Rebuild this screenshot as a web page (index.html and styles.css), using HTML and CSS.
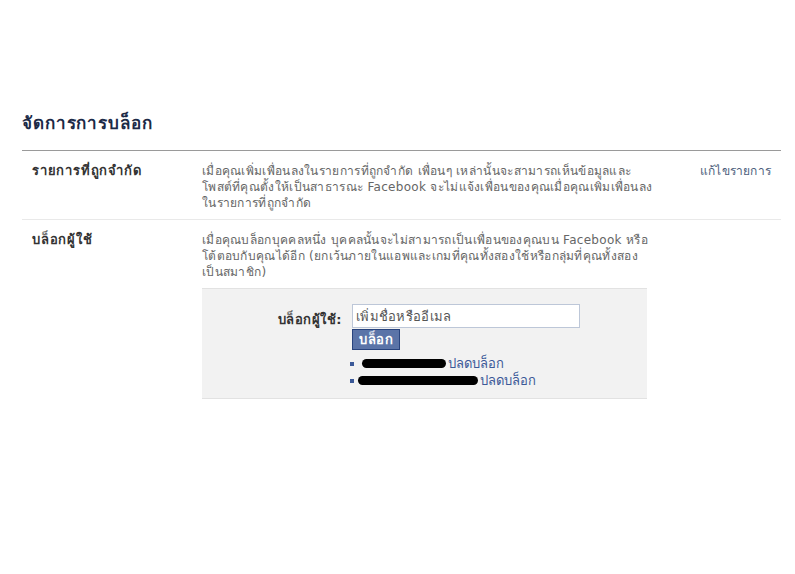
FILE: index.html
```html
<!DOCTYPE html>
<html lang="th">
<head>
    <meta charset="UTF-8">
    <title>จัดการการบล็อก</title>
    <link rel="stylesheet" href="styles.css">
</head>
<body>
    <div class="page">
        <h2 class="page-title">จัดการการบล็อก</h2>
        <div class="settings">
            <div class="row">
                <div class="row-label">รายการที่ถูกจำกัด</div>
                <div class="row-body">
                    <p class="row-desc">เมื่อคุณเพิ่มเพื่อนลงในรายการที่ถูกจำกัด เพื่อนๆ เหล่านั้นจะสามารถเห็นข้อมูลและ<br>โพสต์ที่คุณตั้งให้เป็นสาธารณะ Facebook จะไม่แจ้งเพื่อนของคุณเมื่อคุณเพิ่มเพื่อนลง<br>ในรายการที่ถูกจำกัด</p>
                </div>
                <div class="row-action"><a href="#">แก้ไขรายการ</a></div>
            </div>
            <div class="row">
                <div class="row-label">บล็อกผู้ใช้</div>
                <div class="row-body">
                    <p class="row-desc">เมื่อคุณบล็อกบุคคลหนึ่ง บุคคลนั้นจะไม่สามารถเป็นเพื่อนของคุณบน Facebook หรือ<br>โต้ตอบกับคุณได้อีก (ยกเว้นภายในแอพและเกมที่คุณทั้งสองใช้หรือกลุ่มที่คุณทั้งสอง<br>เป็นสมาชิก)</p>
                    <div class="block-box">
                        <div class="block-form">
                            <label class="block-label" for="block-user">บล็อกผู้ใช้:</label>
                            <div class="block-fields">
                                <input type="text" id="block-user" class="block-input" placeholder="เพิ่มชื่อหรืออีเมล">
                                <button class="block-button">บล็อก</button>
                                <ul class="blocked-list">
                                    <li><span class="redacted r1"></span><a href="#">ปลดบล็อก</a></li>
                                    <li><span class="redacted r2"></span><a href="#">ปลดบล็อก</a></li>
                                </ul>
                            </div>
                        </div>
                    </div>
                </div>
                <div class="row-action"></div>
            </div>
        </div>
    </div>
</body>
</html>
```

FILE: styles.css
```css
* {
    margin: 0;
    padding: 0;
    box-sizing: border-box;
}

body {
    background: #ffffff;
    font-family: Tahoma, "DejaVu Sans", "Noto Sans", sans-serif;
    font-size: 12px;
    color: #333333;
}

.page {
    padding: 111px 14px 0 22px;
}

.page-title {
    font-size: 17px;
    font-weight: bold;
    letter-spacing: 0.9px;
    color: #1c2a47;
    line-height: 24px;
    padding-bottom: 15px;
    border-bottom: 1px solid #9a9a9a;
}

.row {
    display: flex;
    padding: 12px 0 8px;
    border-bottom: 1px solid #e9e9e9;
}

.row:last-child {
    border-bottom: none;
}

.row-label {
    width: 180px;
    padding-left: 10px;
    font-weight: bold;
    font-size: 13px;
    letter-spacing: 0.8px;
    color: #333333;
    line-height: 16px;
}

.row-body {
    width: 480px;
}

.row-desc {
    color: #666666;
    line-height: 16px;
    letter-spacing: 0.3px;
    white-space: nowrap;
}

.row-action {
    padding-left: 18px;
    line-height: 16px;
}

.row-action a {
    color: #4d5e7c;
    text-decoration: none;
    letter-spacing: 0.2px;
}

.block-box {
    width: 445px;
    margin-top: 8px;
    background: #f2f2f2;
    border-top: 1px solid #e2e2e2;
    border-bottom: 1px solid #e2e2e2;
    padding: 15px 0 9px;
}

.block-form {
    display: flex;
}

.block-label {
    width: 150px;
    text-align: right;
    padding: 5px 10px 0 0;
    font-weight: bold;
    color: #333333;
    font-size: 13px;
    letter-spacing: 0.5px;
}

.block-fields {
    display: flex;
    flex-direction: column;
    align-items: flex-start;
}

.block-input {
    width: 228px;
    height: 24px;
    border: 1px solid #bdc7d8;
    padding: 0 3px;
    font-family: inherit;
    font-size: 13px;
    letter-spacing: 0.3px;
    color: #555555;
    background: #ffffff;
}

.block-input::placeholder {
    color: #555555;
}

.block-button {
    margin-top: 1px;
    background: #5b74a8;
    border: 1px solid #29447e;
    color: #ffffff;
    font-family: inherit;
    font-size: 13px;
    font-weight: bold;
    letter-spacing: 0.5px;
    padding: 2px 6px 1px;
    line-height: 16px;
}

.blocked-list {
    list-style: none;
    margin: 5px 0 0 -2px;
    font-size: 13px;
    line-height: 17px;
}

.blocked-list li {
    display: flex;
    align-items: center;
}

.blocked-list li::before {
    content: '';
    width: 4px;
    height: 4px;
    background: #3b5998;
    margin-right: 8px;
}

.blocked-list a {
    color: #3b5998;
    text-decoration: none;
    margin-left: 2px;
}

.redacted {
    display: inline-block;
    height: 9px;
    background: #000000;
    border-radius: 5px;
}

.r1 {
    width: 84px;
}

.r2 {
    width: 120px;
    margin-left: -4px;
}
```
